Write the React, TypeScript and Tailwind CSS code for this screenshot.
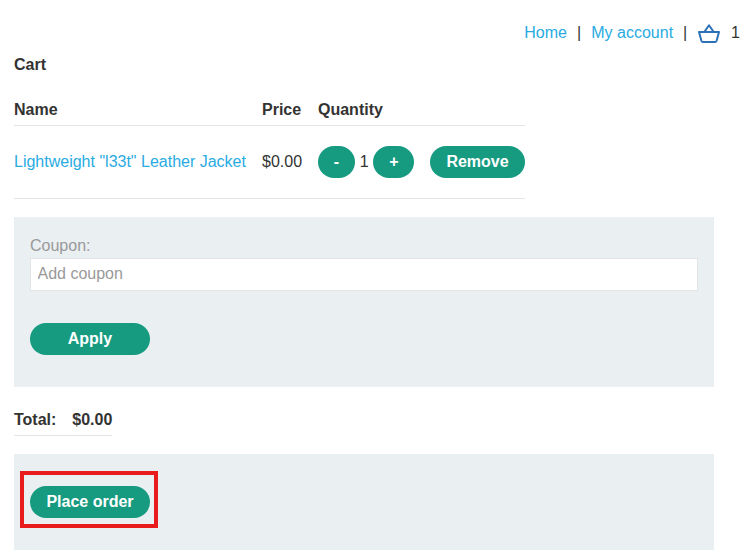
import React from "react";

type ButtonProps = { children: React.ReactNode; className?: string };

function Pill({ children, className = "" }: ButtonProps) {
  return (
    <button
      type="button"
      className={`flex h-8 shrink-0 items-center justify-center rounded-full bg-[#169b80] pb-px font-bold text-white ${className}`}
    >
      {children}
    </button>
  );
}

function Basket() {
  return (
    <svg width="24" height="22" viewBox="0 0 24 22" fill="none" stroke="#2c70b7" strokeWidth="2" strokeLinejoin="round" aria-hidden="true">
      <path d="M2 9H22L19.6 17.8Q19.2 19 18 19H6Q4.8 19 4.4 17.8Z" />
      <path d="M7.3 9L12 2.2L16.7 9" />
    </svg>
  );
}

export default function App() {
  return (
    <div className="h-[558px] w-[754px] overflow-hidden bg-white pl-3.5 font-['Liberation_Sans',Arial,sans-serif] text-base leading-6 text-[#333332]">
      <header className="flex h-[53px] items-start justify-end pr-3.5 pt-[21px]">
        <a className="text-[#29abe2]">Home</a>
        <span className="w-[24.4px] text-center">|</span>
        <a className="text-[#29abe2]">My account</a>
        <span className="w-6 text-center">|</span>
        <span className="mr-[10px] mt-0.5">
          <Basket />
        </span>
        <span>1</span>
      </header>

      <h1 className="font-bold">Cart</h1>

      <section className="mt-[21px] w-[511px]">
        <div className="flex h-7 border-b border-[#e4e4e4] font-bold">
          <span className="w-[248px]">Name</span>
          <span className="w-14">Price</span>
          <span>Quantity</span>
        </div>
        <div className="flex h-[73px] items-start border-b border-[#e4e4e4] pt-5">
          <a className="mt-[4px] w-[248px] text-[#29abe2]">Lightweight "l33t" Leather Jacket</a>
          <span className="mt-[4px] w-14">$0.00</span>
          <Pill className="w-[37px]">-</Pill>
          <span className="mt-[4px] w-[18px] pl-[0.5px] text-center">1</span>
          <Pill className="w-[41px] pl-[0.7px]">+</Pill>
          <Pill className="ml-4 w-[95px]">Remove</Pill>
        </div>
      </section>

      <section className="mt-[18px] h-[170px] w-[700px] bg-[#eaeff2] px-4 pt-[17px]">
        <label className="block text-[#999]">Coupon:</label>
        <input
          type="text"
          placeholder="Add coupon"
          className="block h-[33px] w-full border border-[#e4e4e4] bg-white px-[6.5px] pb-px placeholder:text-[#999]"
        />
        <Pill className="mt-8 w-[120px]">Apply</Pill>
      </section>

      <div className="mt-[21px] flex h-7 w-[98px] border-b border-[#e4e4e4] font-bold">
        <span className="w-[58.3px] shrink-0">Total:</span>
        <span>$0.00</span>
      </div>

      <section className="mt-[18px] h-24 w-[700px] bg-[#eaeff2] pl-1.5 pt-[17px]">
        <div className="h-[57px] w-[138px] border-4 border-[#e81c1c] pl-1.5 pt-[11px]">
          <Pill className="w-[120px]">Place order</Pill>
        </div>
      </section>
    </div>
  );
}
